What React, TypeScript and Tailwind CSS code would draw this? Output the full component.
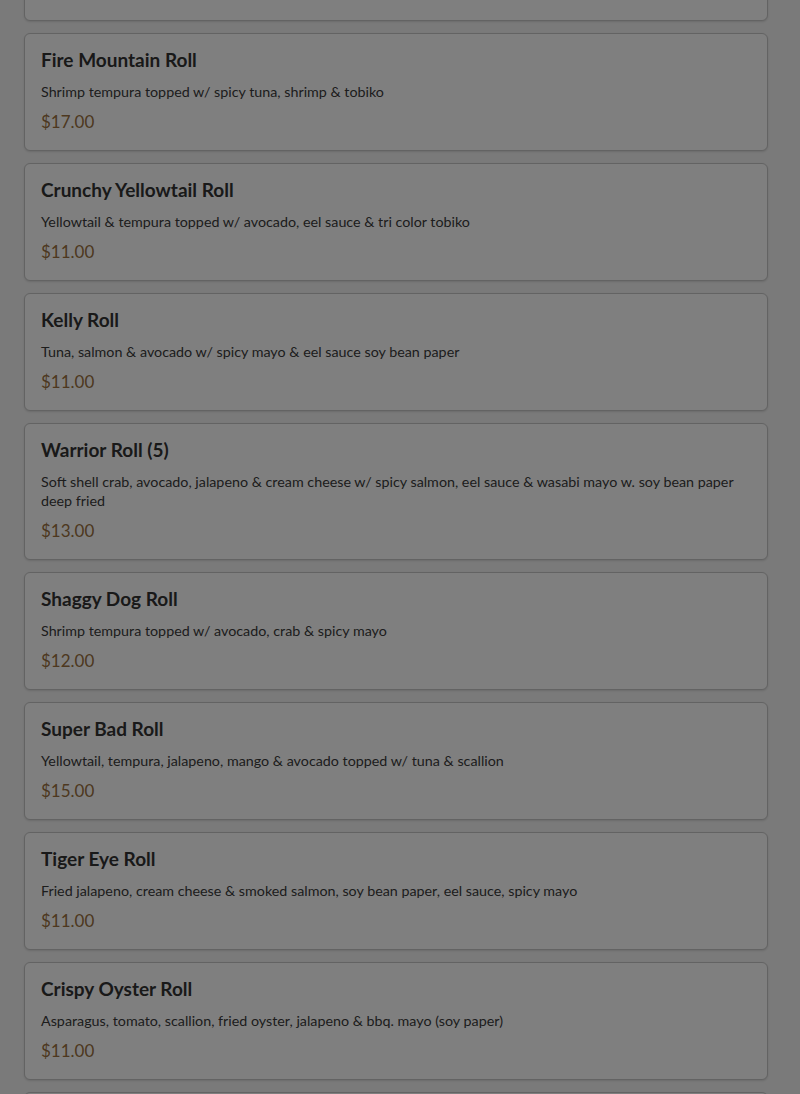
const items = [
  { name: "", desc: "", price: "$12.00", partial: true },
  { name: "Fire Mountain Roll", desc: "Shrimp tempura topped w/ spicy tuna, shrimp & tobiko", price: "$17.00" },
  { name: "Crunchy Yellowtail Roll", desc: "Yellowtail & tempura topped w/ avocado, eel sauce & tri color tobiko", price: "$11.00" },
  { name: "Kelly Roll", desc: "Tuna, salmon & avocado w/ spicy mayo & eel sauce soy bean paper", price: "$11.00" },
  { name: "Warrior Roll (5)", desc: "Soft shell crab, avocado, jalapeno & cream cheese w/ spicy salmon, eel sauce & wasabi mayo w. soy bean paper deep fried", price: "$13.00" },
  { name: "Shaggy Dog Roll", desc: "Shrimp tempura topped w/ avocado, crab & spicy mayo", price: "$12.00" },
  { name: "Super Bad Roll", desc: "Yellowtail, tempura, jalapeno, mango & avocado topped w/ tuna & scallion", price: "$15.00" },
  { name: "Tiger Eye Roll", desc: "Fried jalapeno, cream cheese & smoked salmon, soy bean paper, eel sauce, spicy mayo", price: "$11.00" },
  { name: "Crispy Oyster Roll", desc: "Asparagus, tomato, scallion, fried oyster, jalapeno & bbq. mayo (soy paper)", price: "$11.00" },
  { name: "Spider Roll", desc: "Soft shell crab, avocado, cucumber & tobiko", price: "$12.00" },
];

export default function App() {
  return (
    <div className="relative h-[1094px] overflow-hidden bg-[#f4f4f4]" style={{ fontFamily: "Lato, 'Noto Sans', sans-serif" }}>
      <div className="flex flex-col gap-3 pl-6 pr-8 -mt-[97px]">
        {items.map((it, i) => (
          <div key={i} className="rounded-md border border-[#c6c6c6] bg-white px-4 pt-[14px] pb-[17px] shadow-[0_1px_2px_rgba(0,0,0,0.12)]">
            <h3 className="text-[19px] leading-[24px] font-bold text-[#333]">{it.name || "Spicy Tuna Roll"}</h3>
            <p className="mt-[10px] text-[14.3px] leading-[19px] text-[#3a3a3a]">{it.desc || "Spicy tuna & cucumber"}</p>
            <p className="mt-[10px] text-[17px] leading-[22px] text-[#9a7040]">{it.price}</p>
          </div>
        ))}
      </div>
      <div className="absolute inset-0 bg-black/50" />
    </div>
  );
}
